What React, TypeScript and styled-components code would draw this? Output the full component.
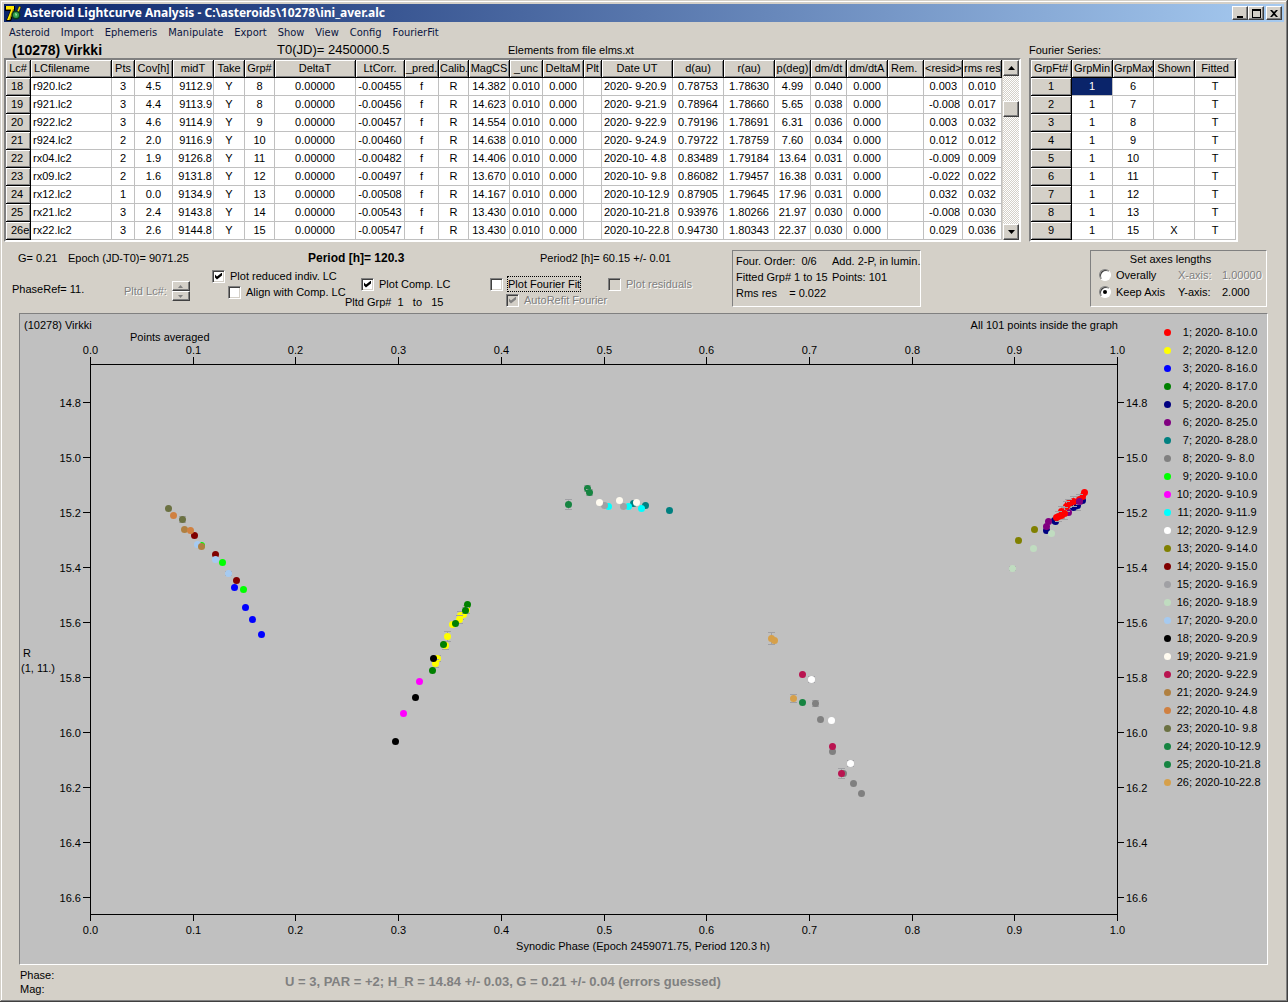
import React from 'react';
import styled, { createGlobalStyle, css } from 'styled-components';

const face = '#d4d0c8';
const shade = '#808080';
const sunken = css`
  border: 1px solid;
  border-color: ${shade} #fff #fff ${shade};
`;
const raised = css`
  background: ${face};
  border: 1px solid;
  border-color: #fff #404040 #404040 #fff;
  box-shadow: inset -1px -1px ${shade};
`;

const GlobalStyle = createGlobalStyle`
  *, *::before, *::after { box-sizing: border-box; }
  body { margin: 0; background: ${face}; }
  body, button, input {
    font-family: "Liberation Sans", Arial, sans-serif;
    font-size: 11px;
    line-height: 16px;
    color: #000;
  }
`;

const Window = styled.div`
  display: flex;
  flex-direction: column;
  min-height: 100vh;
  padding: 4px;
  background: ${face};
  box-shadow: inset -1px -1px #404040, inset 1px 1px ${face}, inset -2px -2px ${shade}, inset 2px 2px #fff;
`;

const TitleBar = styled.header`
  display: flex;
  align-items: center;
  gap: 2px;
  height: 18px;
  padding: 0 2px 0 1px;
  background: linear-gradient(90deg, #0a246a, #a6caf0);
`;

const Title = styled.h1`
  flex: 1;
  margin: 0;
  color: #fff;
  font: bold 12px/18px "Noto Sans", "Open Sans", sans-serif;
`;

const CaptionButton = styled.button<{ $spaced?: boolean }>`
  ${raised}
  display: grid;
  place-items: center;
  width: 16px;
  height: 14px;
  padding: 0;
  margin-left: ${(p) => (p.$spaced ? 0 : -2)}px;
`;

const MenuBar = styled.nav`
  display: flex;
  height: 20px;
`;

const MenuItem = styled.button`
  padding: 1px 6px 0 5px;
  border: 0;
  background: none;
  color: #0a1440;
  font: 11px/18px "DejaVu Sans Condensed", "Noto Sans", sans-serif;
`;

const Tables = styled.div`
  display: flex;
  align-items: flex-start;
  gap: 8px;
  margin-bottom: 2px;
`;

const TableHeading = styled.div<{ $columns: string; $indent: number }>`
  display: grid;
  grid-template-columns: ${(p) => p.$columns};
  align-items: center;
  height: 16px;
  padding-left: ${(p) => p.$indent}px;
  white-space: nowrap;
`;

const ObjectName = styled.strong`
  font-size: 14px;
`;

const StartDate = styled.span`
  font-size: 13px;
`;

const Frame = styled.div`
  display: flex;
  gap: 1px;
  border: 2px solid;
  border-color: ${shade} #fff #fff ${shade};
`;

const Grid = styled.table<{ $width: number }>`
  width: ${(p) => p.$width}px;
  table-layout: fixed;
  border-collapse: separate;
  border-spacing: 0;
  background: #fff;
`;

const fixedCell = css`
  background: ${face};
  border-right: 1px solid #000;
  border-bottom: 1px solid #000;
  box-shadow: inset 1px 1px #fff, inset -1px -1px ${shade};
  font-weight: normal;
  white-space: nowrap;
  overflow: hidden;
`;

type Align = 'left' | 'center' | 'right';

const HeadCell = styled.th<{ $align?: Align }>`
  ${fixedCell}
  height: 18px;
  padding: 0 ${(p) => (p.$align === 'left' ? 3 : 1)}px;
  line-height: 17px;
  text-align: ${(p) => p.$align ?? 'center'};
`;

const RowHead = styled.th<{ $indent?: number }>`
  ${fixedCell}
  height: 18px;
  padding: 0 0 0 ${(p) => p.$indent ?? 0}px;
  line-height: 17px;
  text-align: ${(p) => (p.$indent ? 'left' : 'center')};
`;

const Cell = styled.td<{ $align?: Align; $pad?: number; $selected?: boolean }>`
  height: 18px;
  padding: 0 ${(p) => p.$pad ?? 0}px;
  border-right: 1px solid #c0c0c0;
  border-bottom: 1px solid #c0c0c0;
  background: ${(p) => (p.$selected ? '#0a246a' : '#fff')};
  color: ${(p) => (p.$selected ? '#fff' : '#000')};
  line-height: 17px;
  text-align: ${(p) => p.$align ?? 'center'};
  white-space: pre;
  overflow: hidden;
`;

const ScrollTrack = styled.div`
  display: flex;
  flex-direction: column;
  width: 16px;
  background: repeating-conic-gradient(#fff 0 25%, ${face} 0 50%) 0 0 / 2px 2px;
`;

const ScrollButton = styled.button`
  ${raised}
  display: grid;
  place-items: center;
  width: 16px;
  height: 16px;
  padding: 0;
`;

const ScrollThumb = styled.div`
  ${raised}
  height: 16px;
  margin: 25px 0 auto;
`;

const Controls = styled.section`
  display: flex;
  align-items: flex-start;
  padding: 6px 17px 1px 2px;
  white-space: nowrap;
`;

const Settings = styled.div`
  width: 726px;
`;

const InfoRow = styled.div`
  display: grid;
  grid-template-columns: 50px 240px 232px auto;
  align-items: center;
  height: 14px;
  margin-bottom: 4px;
  padding-left: 12px;
`;

const Period = styled.strong`
  font-size: 12px;
`;

const OptionsRow = styled.div`
  display: grid;
  grid-template-columns: 112px 88px 133px 145px 118px auto;
  padding-left: 6px;
`;

const Stack = styled.div<{ $top: number }>`
  padding-top: ${(p) => p.$top}px;
`;

const disabledText = css`
  color: ${shade};
  text-shadow: 1px 1px #fff;
`;

const Option = styled.label<{ $indent?: boolean; $disabled?: boolean }>`
  display: flex;
  align-items: center;
  gap: 5px;
  height: 16px;
  margin-left: ${(p) => (p.$indent ? 16 : 0)}px;
  ${(p) => p.$disabled && disabledText}
`;

const CheckBox = styled.input.attrs({ type: 'checkbox' })`
  appearance: none;
  flex: none;
  width: 13px;
  height: 13px;
  margin: 0;
  background: #fff;
  border: 1px solid;
  border-color: ${shade} #fff #fff ${shade};
  box-shadow: inset 1px 1px #404040, inset -1px -1px ${face};
  &:disabled { background: ${face}; }
  &:checked::after {
    content: '';
    display: block;
    width: 7px;
    height: 7px;
    margin: 2px;
    background: #000;
    clip-path: polygon(0 28%, 28% 57%, 100% 0, 100% 42%, 28% 100%, 0 71%);
  }
  &:disabled:checked::after { background: ${shade}; }
`;

const Radio = styled.input.attrs({ type: 'radio' })`
  appearance: none;
  flex: none;
  width: 12px;
  height: 12px;
  margin: 0;
  border-radius: 50%;
  background: #fff;
  border: 1px solid;
  border-color: ${shade} #fff #fff ${shade};
  box-shadow: inset 1px 1px #404040;
  &:checked::after {
    content: '';
    display: block;
    width: 4px;
    height: 4px;
    margin: 3px;
    border-radius: 50%;
    background: #000;
  }
`;

const Focused = styled.span`
  outline: 1px dotted #000;
  line-height: 14px;
`;

const IndexPicker = styled.div`
  display: flex;
  align-items: center;
  gap: 5px;
  padding-top: 6px;
  ${disabledText}
`;

const Spinner = styled.span`
  display: flex;
  flex-direction: column;
`;

const SpinButton = styled.button`
  ${raised}
  display: grid;
  place-items: center;
  width: 18px;
  height: 10px;
  padding: 0;
`;

const GroupRange = styled.span`
  display: block;
  line-height: 20px;
  white-space: pre;
`;

const FitBox = styled.div`
  ${sunken}
  display: grid;
  grid-template-columns: 96px auto;
  grid-auto-rows: 16px;
  width: 189px;
  height: 57px;
  padding: 2px 0 0 3px;
  white-space: pre;
`;

const AxesBox = styled.fieldset`
  ${sunken}
  display: grid;
  grid-template-columns: 79px 44px auto;
  grid-template-rows: 15px 18px 16px;
  align-items: center;
  width: 177px;
  height: 57px;
  margin: 0 0 0 auto;
  padding: 0 0 0 8px;
`;

const AxesTitle = styled.span`
  grid-column: 1 / -1;
  padding-right: 24px;
  line-height: 14px;
  text-align: center;
`;

const Muted = styled.span`
  ${disabledText}
`;

const PlotPanel = styled.main`
  ${sunken}
  display: flex;
  margin: 0 16px 0 15px;
  background: #c0c0c0;
`;

const Chart = styled.svg`
  display: block;
  flex: 1;
  min-width: 0;
  font-size: 11px;
`;

const Legend = styled.ol`
  width: 107px;
  margin: 0;
  padding: 9px 0 0 4px;
  list-style: none;
`;

const LegendItem = styled.li`
  display: grid;
  grid-template-columns: 12px 16px auto;
  align-items: center;
  height: 18px;
  white-space: pre;
`;

const LegendNumber = styled.span`
  text-align: right;
`;

const Dot = styled.i<{ $color: string }>`
  width: 7px;
  height: 7px;
  border-radius: 50%;
  background: ${(p) => p.$color};
`;

const Footer = styled.footer`
  display: grid;
  grid-template-columns: 265px auto;
  align-items: center;
  padding: 3px 0 0 16px;
`;

const Readout = styled.div`
  line-height: 14px;
`;

const Summary = styled.strong`
  color: ${shade};
  font-size: 13px;
`;

interface Column { name: string; width: number; align?: Align; pad?: number; headAlign?: Align }

const columns: Column[] = [
  { name: 'Lc#', width: 25 },
  { name: 'LCfilename', width: 81, align: 'left', pad: 2, headAlign: 'left' },
  { name: 'Pts', width: 23 },
  { name: 'Cov[h]', width: 38 },
  { name: 'midT', width: 41, align: 'right', pad: 1 },
  { name: 'Take', width: 31 },
  { name: 'Grp#', width: 30 },
  { name: 'DeltaT', width: 81 },
  { name: 'LtCorr.', width: 49 },
  { name: '_pred.', width: 34 },
  { name: 'Calib.', width: 30 },
  { name: 'MagCS', width: 41 },
  { name: '_unc', width: 33 },
  { name: 'DeltaM', width: 41 },
  { name: 'Plt', width: 18 },
  { name: 'Date UT', width: 71, align: 'left', pad: 2 },
  { name: 'd(au)', width: 51 },
  { name: 'r(au)', width: 51 },
  { name: 'p(deg)', width: 36 },
  { name: 'dm/dt', width: 36 },
  { name: 'dm/dtA', width: 41 },
  { name: 'Rem.', width: 36, headAlign: 'left' },
  { name: '<resid>', width: 39, align: 'right', pad: 5 },
  { name: 'rms res', width: 39 },
];

const row = (
  id: string, file: string, pts: string, cov: string, mid: string, grp: string, lt: string, mag: string,
  date: string, d: string, r: string, p: string, dm: string, resid: string, rms: string,
) => [id, file, pts, cov, mid, 'Y', grp, '0.00000', lt, 'f', 'R', mag, '0.010', '0.000', '', date, d, r, p, dm, '0.000', '', resid, rms];

const lightcurves = [
  row('18', 'r920.lc2', '3', '4.5', '9112.9', '8', '-0.00455', '14.382', '2020- 9-20.9', '0.78753', '1.78630', '4.99', '0.040', '0.003', '0.010'),
  row('19', 'r921.lc2', '3', '4.4', '9113.9', '8', '-0.00456', '14.623', '2020- 9-21.9', '0.78964', '1.78660', '5.65', '0.038', '-0.008', '0.017'),
  row('20', 'r922.lc2', '3', '4.6', '9114.9', '9', '-0.00457', '14.554', '2020- 9-22.9', '0.79196', '1.78691', '6.31', '0.036', '0.003', '0.032'),
  row('21', 'r924.lc2', '2', '2.0', '9116.9', '10', '-0.00460', '14.638', '2020- 9-24.9', '0.79722', '1.78759', '7.60', '0.034', '0.012', '0.012'),
  row('22', 'rx04.lc2', '2', '1.9', '9126.8', '11', '-0.00482', '14.406', '2020-10- 4.8', '0.83489', '1.79184', '13.64', '0.031', '-0.009', '0.009'),
  row('23', 'rx09.lc2', '2', '1.6', '9131.8', '12', '-0.00497', '13.670', '2020-10- 9.8', '0.86082', '1.79457', '16.38', '0.031', '-0.022', '0.022'),
  row('24', 'rx12.lc2', '1', '0.0', '9134.9', '13', '-0.00508', '14.167', '2020-10-12.9', '0.87905', '1.79645', '17.96', '0.031', '0.032', '0.032'),
  row('25', 'rx21.lc2', '3', '2.4', '9143.8', '14', '-0.00543', '13.430', '2020-10-21.8', '0.93976', '1.80266', '21.97', '0.030', '-0.008', '0.030'),
  row('26e', 'rx22.lc2', '3', '2.6', '9144.8', '15', '-0.00547', '13.430', '2020-10-22.8', '0.94730', '1.80343', '22.37', '0.030', '0.029', '0.036'),
];

const fourierMax = ['6', '7', '8', '9', '10', '11', '12', '13', '15'];

const legend: [string, string][] = [
  ['#ff0000', '2020- 8-10.0'], ['#ffff00', '2020- 8-12.0'], ['#0000ff', '2020- 8-16.0'], ['#008000', '2020- 8-17.0'],
  ['#000080', '2020- 8-20.0'], ['#800080', '2020- 8-25.0'], ['#008080', '2020- 8-28.0'], ['#808080', '2020- 9- 8.0'],
  ['#00ff00', '2020- 9-10.0'], ['#ff00ff', '2020- 9-10.9'], ['#00ffff', '2020- 9-11.9'], ['#ffffff', '2020- 9-12.9'],
  ['#808000', '2020- 9-14.0'], ['#800000', '2020- 9-15.0'], ['#a0a0a4', '2020- 9-16.9'], ['#c0dcc0', '2020- 9-18.9'],
  ['#a6caf0', '2020- 9-20.0'], ['#000000', '2020- 9-20.9'], ['#fffbf0', '2020- 9-21.9'], ['#b91450', '2020- 9-22.9'],
  ['#b08040', '2020- 9-24.9'], ['#d08040', '2020-10- 4.8'], ['#6b7142', '2020-10- 9.8'], ['#168441', '2020-10-12.9'],
  ['#168441', '2020-10-21.8'], ['#d6a04a', '2020-10-22.8'],
];

// Each point: chart x, chart y, optional half length of its error bar.
type Point = [number, number, number?];

const series: { group: number; points: Point[] }[] = [
  { group: 2, points: [[466, 609, 4], [463, 614], [460, 615, 4], [459, 619, 4], [452, 624], [447, 636, 5], [445, 645, 4], [437, 658, 3], [435, 663, 4]] },
  { group: 3, points: [[234, 587], [245, 607], [252, 619], [261, 634]] },
  { group: 4, points: [[467, 604], [465, 610, 3], [455, 623], [443, 644], [432, 670]] },
  { group: 5, points: [[1082, 500], [1077, 505, 5], [1073, 507], [1054, 520], [1055, 521], [1046, 530]] },
  { group: 6, points: [[1068, 512], [1048, 521], [1046, 526]] },
  { group: 1, points: [[1084, 492], [1082, 496], [1079, 499, 5], [1073, 501, 5], [1070, 502], [1068, 503, 4], [1066, 506, 5], [1061, 511, 5], [1064, 513, 6], [1061, 515], [1058, 516, 5], [1056, 517]] },
  { group: 6, points: [[1079, 501]] },
  { group: 7, points: [[633, 503], [645, 505], [669, 510]] },
  { group: 8, points: [[815, 703, 3], [820, 719], [832, 751], [843, 773], [853, 783], [861, 793]] },
  { group: 9, points: [[201, 545], [222, 562], [243, 589]] },
  { group: 10, points: [[419, 681], [403, 713]] },
  { group: 11, points: [[608, 506], [628, 506], [641, 508]] },
  { group: 12, points: [[811, 679, 3], [831, 720], [850, 763, 3]] },
  { group: 13, points: [[1034, 529], [1018, 540]] },
  { group: 14, points: [[194, 535], [215, 554], [236, 580]] },
  { group: 15, points: [[604, 505], [623, 506]] },
  { group: 16, points: [[1051, 533], [1033, 548], [1012, 568, 2]] },
  { group: 17, points: [[197, 544], [215, 559], [228, 573, 2]] },
  { group: 18, points: [[433, 658], [415, 697], [395, 741]] },
  { group: 19, points: [[599, 502], [619, 500], [636, 502]] },
  { group: 20, points: [[802, 674], [832, 746], [841, 773, 5]] },
  { group: 21, points: [[184, 529], [201, 546]] },
  { group: 22, points: [[173, 515], [190, 530]] },
  { group: 23, points: [[168, 508], [182, 519, 3]] },
  { group: 24, points: [[802, 702]] },
  { group: 25, points: [[587, 488, 3], [589, 492, 3], [568, 504, 5]] },
  { group: 26, points: [[771, 638, 6], [774, 640], [793, 698, 4]] },
];

const phases = Array.from({ length: 11 }, (_, i) => ({ label: (i / 10).toFixed(1), x: Math.round(90 + i * 102.7) + 0.5 }));
const magnitudes = Array.from({ length: 10 }, (_, i) => ({ label: (14.8 + i * 0.2).toFixed(1), y: 402.5 + i * 55 }));

function ErrorBar({ x, y, size }: { x: number; y: number; size: number }) {
  return <path d={`M${x - 3} ${y - size}h7M${x - 3} ${y + size}h7M${x + 0.5} ${y - size}v${size * 2}`} stroke="#a0a0a4" fill="none" transform="translate(0 .5)" />;
}

function LightcurveChart() {
  return (
    <Chart viewBox="20 314 1140 650" role="img" aria-label="Composite lightcurve">
      <g stroke="#000" fill="none">
        <path d="M90 364.5H1118M90 914.5H1118M90.5 364V914M1117.5 364V914" />
        {phases.map(({ x }) => <path key={x} d={`M${x} 357V364M${x} 915V921`} />)}
        {magnitudes.map(({ y }) => <path key={y} d={`M83 ${y}H90M1118 ${y}H1124`} />)}
      </g>
      {phases.map(({ x, label }) => (
        <g key={label} textAnchor="middle">
          <text x={x} y={354}>{label}</text>
          <text x={x} y={934}>{label}</text>
        </g>
      ))}
      {magnitudes.map(({ y, label }) => (
        <g key={label}>
          <text x={81} y={y + 4} textAnchor="end">{label}</text>
          <text x={1126} y={y + 4}>{label}</text>
        </g>
      ))}
      <text x={24} y={329}>(10278) Virkki</text>
      <text x={130} y={341}>Points averaged</text>
      <text x={1118} y={329} textAnchor="end">All 101 points inside the graph</text>
      <text x={23} y={657}>R</text>
      <text x={21} y={672}>(1, 11.)</text>
      <text x={643} y={950} textAnchor="middle">Synodic Phase (Epoch 2459071.75, Period 120.3 h)</text>
      {series.map(({ group, points }, s) => (
        <g key={s} fill={legend[group - 1][0]}>
          {points.map(([x, y, size], i) => (
            <React.Fragment key={i}>
              {size && <ErrorBar x={x} y={y} size={size} />}
              <circle cx={x + 0.5} cy={y + 0.5} r={3.5} />
            </React.Fragment>
          ))}
        </g>
      ))}
    </Chart>
  );
}

function Arrow({ down, small, color = '#000' }: { down?: boolean; small?: boolean; color?: string }) {
  const w = small ? 5 : 7;
  const h = small ? 3 : 4;
  return (
    <svg width={w} height={h} viewBox={`0 0 ${w} ${h}`} aria-hidden="true">
      <path fill={color} d={down ? `M0 0H${w}L${w / 2} ${h}Z` : `M0 ${h}H${w}L${w / 2} 0Z`} />
    </svg>
  );
}

function AppIcon() {
  return (
    <svg width="17" height="16" viewBox="0 0 17 16" aria-hidden="true">
      <path d="M0 1h10v4L6 16H1L5 6H0z" fill="#000" />
      <path d="M1 1h8v3L5 15H2L6 5H1z" fill="#ffe800" />
      <path d="M1 4h5v1H1zM8 4L4 15h1l4-11z" fill="#a08000" />
      <circle cx="11" cy="10" r="4.5" fill="#0a3a1c" />
      <circle cx="11" cy="10" r="3" fill="#2fa04c" />
      <path d="M10 8l2 1-1 3z" fill="#a8e8a8" />
      <path d="M12 6l2-5 2 1-2 5z" fill="#f0e000" stroke="#000" strokeWidth=".5" />
    </svg>
  );
}

const menu = ['Asteroid', 'Import', 'Ephemeris', 'Manipulate', 'Export', 'Show', 'View', 'Config', 'FourierFit'];

export default function App() {
  return (
    <>
      <GlobalStyle />
      <Window>
        <TitleBar>
          <AppIcon />
          <Title>Asteroid Lightcurve Analysis - C:\asteroids\10278\ini_aver.alc</Title>
          <CaptionButton $spaced aria-label="Minimize">
            <svg width="9" height="9"><path d="M1 7h6v2H1z" /></svg>
          </CaptionButton>
          <CaptionButton aria-label="Maximize">
            <svg width="9" height="9"><path d="M0 0h9v9H0zM1 2v6h7V2z" fillRule="evenodd" /></svg>
          </CaptionButton>
          <CaptionButton $spaced aria-label="Close">
            <svg width="8" height="7"><path d="M0 0h2l2 2 2-2h2L5 3.5 8 7H6L4 5 2 7H0l3-3.5z" /></svg>
          </CaptionButton>
        </TitleBar>
        <MenuBar>
          {menu.map((item) => <MenuItem key={item}>{item}</MenuItem>)}
        </MenuBar>

        <Tables>
          <div>
            <TableHeading $columns="265px 231px auto" $indent={8}>
              <ObjectName>(10278) Virkki</ObjectName>
              <StartDate>T0(JD)= 2450000.5</StartDate>
              <span>Elements from file elms.xt</span>
            </TableHeading>
            <Frame>
              <Grid $width={996}>
                <colgroup>
                  {columns.map((c) => <col key={c.name} style={{ width: c.width }} />)}
                </colgroup>
                <thead>
                  <tr>{columns.map((c) => <HeadCell key={c.name} scope="col" $align={c.headAlign}>{c.name}</HeadCell>)}</tr>
                </thead>
                <tbody>
                  {lightcurves.map(([id, ...cells]) => (
                    <tr key={id}>
                      <RowHead scope="row" $indent={5}>{id}</RowHead>
                      {cells.map((value, i) => (
                        <Cell key={i} $align={columns[i + 1].align} $pad={columns[i + 1].pad}>{value}</Cell>
                      ))}
                    </tr>
                  ))}
                </tbody>
              </Grid>
              <ScrollTrack>
                <ScrollButton aria-label="Scroll up"><Arrow /></ScrollButton>
                <ScrollThumb />
                <ScrollButton aria-label="Scroll down"><Arrow down /></ScrollButton>
              </ScrollTrack>
            </Frame>
          </div>
          <div>
            <TableHeading $columns="auto" $indent={0}>
              <span>Fourier Series:</span>
            </TableHeading>
            <Frame>
              <Grid $width={205}>
                <thead>
                  <tr>
                    {['GrpFt#', 'GrpMin', 'GrpMax', 'Shown', 'Fitted'].map((name) => (
                      <HeadCell key={name} scope="col">{name}</HeadCell>
                    ))}
                  </tr>
                </thead>
                <tbody>
                  {fourierMax.map((max, i) => (
                    <tr key={max}>
                      <RowHead scope="row">{i + 1}</RowHead>
                      <Cell $selected={i === 0}>1</Cell>
                      <Cell>{max}</Cell>
                      <Cell>{i === 8 ? 'X' : ''}</Cell>
                      <Cell>T</Cell>
                    </tr>
                  ))}
                </tbody>
              </Grid>
            </Frame>
          </div>
        </Tables>

        <Controls>
          <Settings>
            <InfoRow>
              <span>G= 0.21</span>
              <span>Epoch (JD-T0)= 9071.25</span>
              <Period>Period [h]= 120.3</Period>
              <span>Period2 [h]= 60.15 +/- 0.01</span>
            </InfoRow>
            <OptionsRow>
              <Stack $top={13}>PhaseRef= 11.</Stack>
              <Stack $top={7}>
                <IndexPicker>
                  <span>Pltd Lc#:</span>
                  <Spinner>
                    <SpinButton disabled aria-label="Next lightcurve"><Arrow small color={shade} /></SpinButton>
                    <SpinButton disabled aria-label="Previous lightcurve"><Arrow small down color={shade} /></SpinButton>
                  </Spinner>
                </IndexPicker>
              </Stack>
              <Stack $top={0}>
                <Option><CheckBox defaultChecked />Plot reduced indiv. LC</Option>
                <Option $indent><CheckBox />Align with Comp. LC</Option>
              </Stack>
              <Stack $top={8}>
                <Option $indent><CheckBox defaultChecked />Plot Comp. LC</Option>
                <GroupRange>{'Pltd Grp#  1   to   15'}</GroupRange>
              </Stack>
              <Stack $top={8}>
                <Option><CheckBox /><Focused>Plot Fourier Fit</Focused></Option>
                <Option $indent $disabled><CheckBox defaultChecked disabled />AutoRefit Fourier</Option>
              </Stack>
              <Stack $top={8}>
                <Option $disabled><CheckBox disabled />Plot residuals</Option>
              </Stack>
            </OptionsRow>
          </Settings>
          <FitBox>
            <span>{'Four. Order:  0/6'}</span>
            <span>Add. 2-P, in lumin.</span>
            <span>Fitted Grp# 1 to 15</span>
            <span>Points: 101</span>
            <span>{'Rms res    = 0.022'}</span>
          </FitBox>
          <AxesBox>
            <AxesTitle>Set axes lengths</AxesTitle>
            <Option><Radio name="axes" />Overally</Option>
            <Muted>X-axis:</Muted>
            <Muted>1.00000</Muted>
            <Option><Radio name="axes" defaultChecked />Keep Axis</Option>
            <span>Y-axis:</span>
            <span>2.000</span>
          </AxesBox>
        </Controls>

        <PlotPanel>
          <LightcurveChart />
          <Legend>
            {legend.map(([color, date], i) => (
              <LegendItem key={date}>
                <Dot $color={color} />
                <LegendNumber>{i + 1};</LegendNumber>
                <span> {date}</span>
              </LegendItem>
            ))}
          </Legend>
        </PlotPanel>

        <Footer>
          <Readout>
            <div>Phase:</div>
            <div>Mag:</div>
          </Readout>
          <Summary>U = 3, PAR = +2; H_R = 14.84 +/- 0.03, G = 0.21 +/- 0.04 (errors guessed)</Summary>
        </Footer>
      </Window>
    </>
  );
}
